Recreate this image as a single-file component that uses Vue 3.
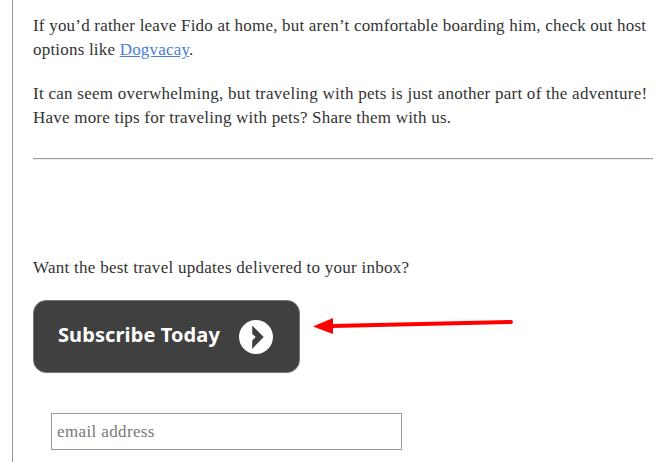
<template>
  <main class="post">
    <p class="paragraph">
      <span class="line line-fido">If you’d rather leave Fido at home, but aren’t comfortable boarding him, check out host</span>
      <span class="line line-link">options like <a href="#" @click.prevent>Dogvacay</a>.</span>
    </p>
    <p class="paragraph">
      <span class="line line-adventure">It can seem overwhelming, but traveling with pets is just another part of the adventure!</span>
      <span class="line line-tips">Have more tips for traveling with pets? Share them with us.</span>
    </p>
    <hr class="divider" />
    <p class="prompt">Want the best travel updates delivered to your inbox?</p>
    <div class="subscribe-row">
      <button class="subscribe-btn" type="button">
        <span class="subscribe-label">Subscribe Today</span>
        <svg class="chevron" width="34" height="34" viewBox="0 0 34 34">
          <circle cx="17" cy="17" r="17" fill="#fff" />
          <path d="M13.2 5.5L24.7 17L13.2 29V20.5L16.7 17L13.2 14Z" fill="#404040" />
        </svg>
      </button>
      <svg class="arrow" width="202" height="20" viewBox="0 0 202 20">
        <path d="M0 9.5L20 1V17Z" fill="#f00" />
        <path d="M19 8.9L198 5" stroke="#f00" stroke-width="4" stroke-linecap="round" />
      </svg>
    </div>
    <input v-model="email" class="email-input" type="text" placeholder="email address" />
  </main>
</template>

<script setup>
import { ref } from "vue";

const email = ref("");
</script>

<style>
body {
  margin: 0;
  background: #fff;
}
</style>

<style scoped>
.post {
  box-sizing: border-box;
  height: 462px;
  margin-left: 12px;
  padding: 14px 18px 0 20px;
  overflow: hidden;
  border-left: 1px solid #999;
  color: #333;
  font-family: "Liberation Serif", serif;
  font-size: 17px;
  line-height: 24px;
}

.paragraph {
  margin: 0 0 20px;
}

.line {
  display: block;
  white-space: nowrap;
}

.line-fido {
  letter-spacing: 0.205px;
}

.line-link {
  letter-spacing: 0.2px;
}

.line-adventure {
  letter-spacing: 0.26px;
}

.line-tips {
  letter-spacing: 0.215px;
}

a {
  color: #4b7ed6;
  text-decoration: underline;
}

.divider {
  height: 0;
  margin: 28px 0 96px;
  border: 0;
  border-top: 1px solid #999;
  border-bottom: 1px solid #eee;
}

.prompt {
  margin: 0 0 20px;
  letter-spacing: 0.27px;
}

.subscribe-row {
  display: flex;
  align-items: flex-start;
  gap: 13px;
}

.subscribe-btn {
  display: flex;
  align-items: center;
  box-sizing: border-box;
  width: 267px;
  height: 73px;
  padding: 0 0 0 24px;
  border: 1px solid #777;
  border-radius: 13px;
  background: #404040;
  color: #fff;
  cursor: pointer;
}

.subscribe-label {
  width: 181px;
  padding-bottom: 3px;
  font-family: "Noto Sans", sans-serif;
  font-size: 20px;
  font-weight: 700;
  letter-spacing: 0.1px;
  line-height: 28px;
  text-align: left;
  white-space: nowrap;
}

.arrow {
  margin-top: 17px;
}

.email-input {
  display: block;
  box-sizing: border-box;
  width: 351px;
  height: 37px;
  margin: 40px 0 0 18px;
  padding: 0 5px;
  border: 1px solid #999;
  border-radius: 0;
  outline: none;
  color: #333;
  font: inherit;
  letter-spacing: 0.37px;
}

.email-input::placeholder {
  color: #777;
  opacity: 1;
}
</style>
